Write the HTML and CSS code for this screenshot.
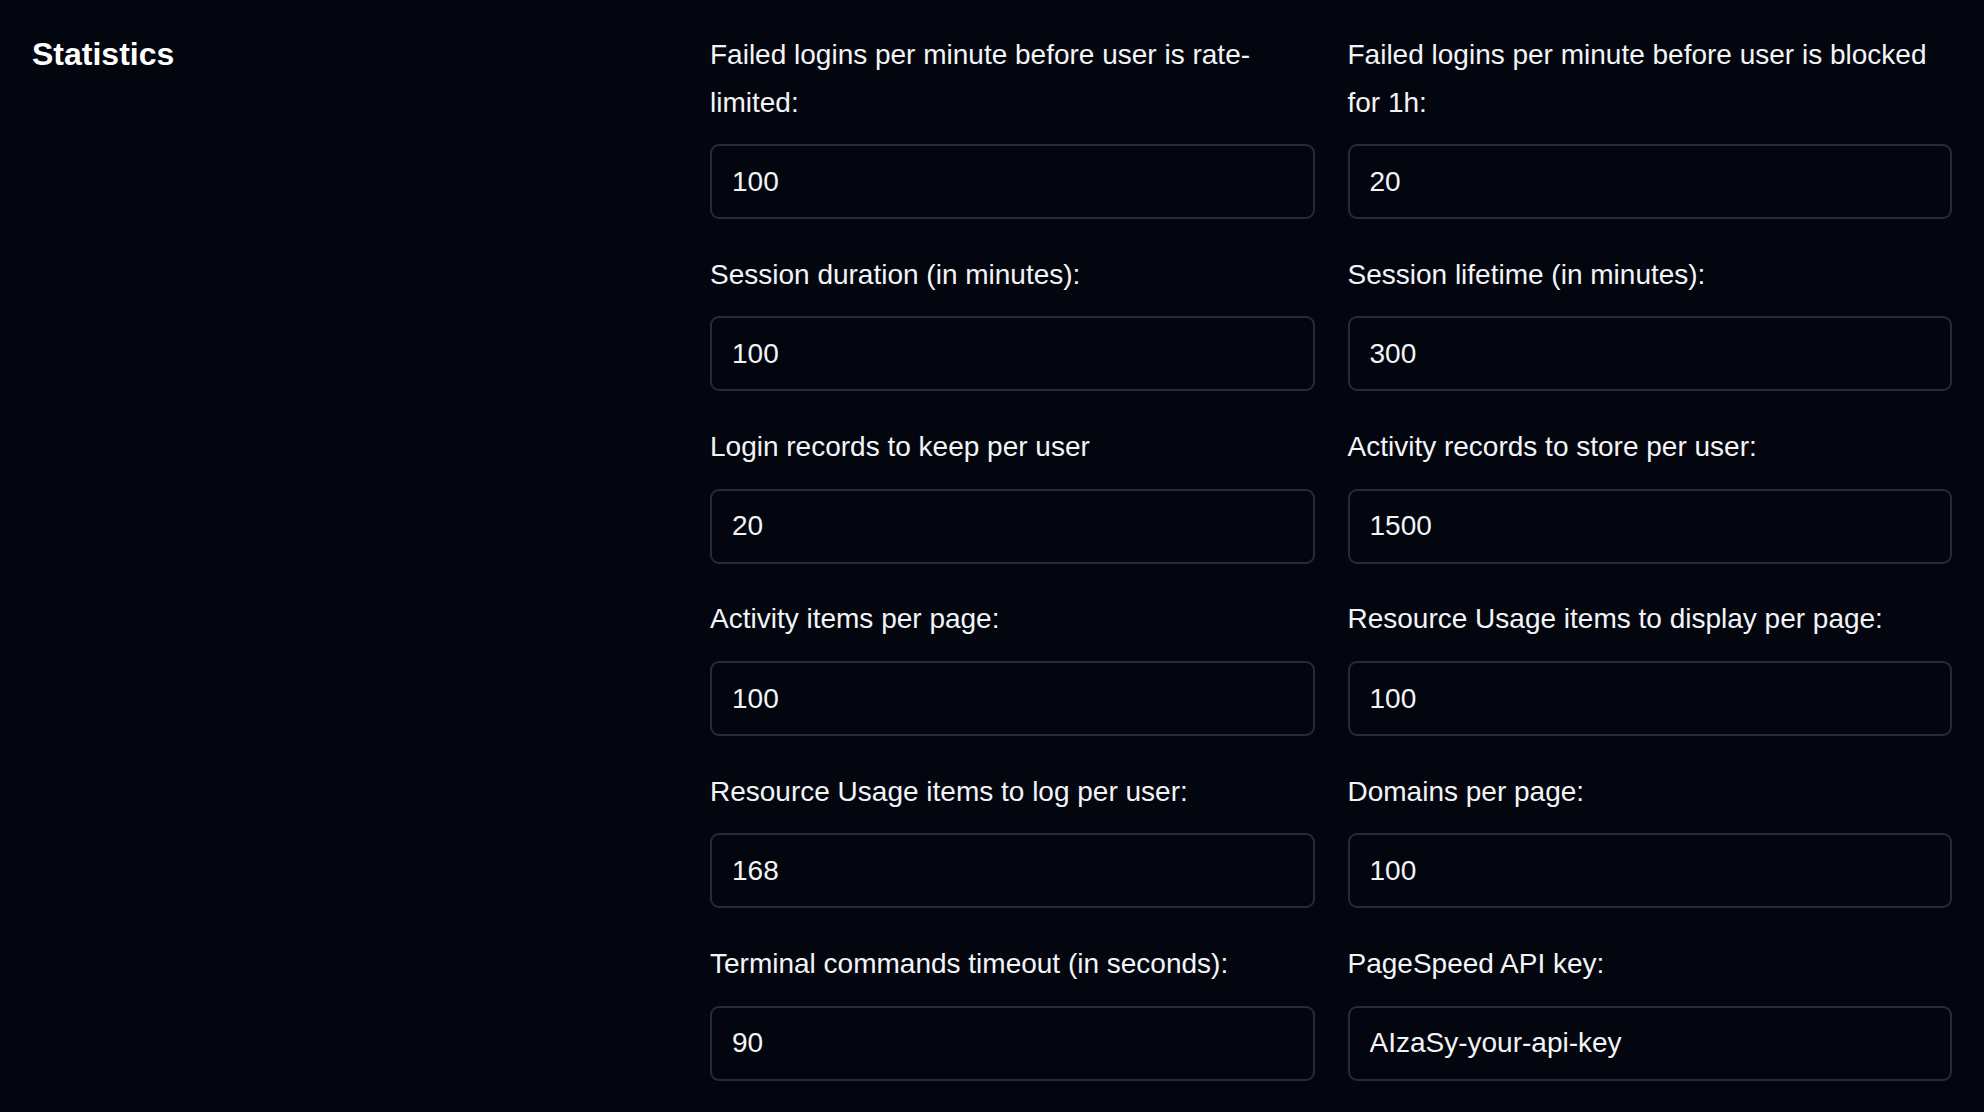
FILE: index.html
```html
<!DOCTYPE html>
<html lang="en">
<head>
<meta charset="utf-8">
<title>Statistics settings</title>
<link rel="stylesheet" href="styles.css">
</head>
<body>
<div class="page">
  <section class="section">
    <h2 class="section-title">Statistics</h2>
    <div class="fields">
      <div class="field">
        <label class="label" for="f1">Failed logins per minute before user is rate-limited:</label>
        <input class="input" id="f1" type="text" value="100">
      </div>
      <div class="field">
        <label class="label" for="f2">Failed logins per minute before user is blocked for 1h:</label>
        <input class="input" id="f2" type="text" value="20">
      </div>
      <div class="field">
        <label class="label" for="f3">Session duration (in minutes):</label>
        <input class="input" id="f3" type="text" value="100">
      </div>
      <div class="field">
        <label class="label" for="f4">Session lifetime (in minutes):</label>
        <input class="input" id="f4" type="text" value="300">
      </div>
      <div class="field">
        <label class="label" for="f5">Login records to keep per user</label>
        <input class="input" id="f5" type="text" value="20">
      </div>
      <div class="field">
        <label class="label" for="f6">Activity records to store per user:</label>
        <input class="input" id="f6" type="text" value="1500">
      </div>
      <div class="field">
        <label class="label" for="f7">Activity items per page:</label>
        <input class="input" id="f7" type="text" value="100">
      </div>
      <div class="field">
        <label class="label" for="f8">Resource Usage items to display per page:</label>
        <input class="input" id="f8" type="text" value="100">
      </div>
      <div class="field">
        <label class="label" for="f9">Resource Usage items to log per user:</label>
        <input class="input" id="f9" type="text" value="168">
      </div>
      <div class="field">
        <label class="label" for="f10">Domains per page:</label>
        <input class="input" id="f10" type="text" value="100">
      </div>
      <div class="field">
        <label class="label" for="f11">Terminal commands timeout (in seconds):</label>
        <input class="input" id="f11" type="text" value="90">
      </div>
      <div class="field">
        <label class="label" for="f12">PageSpeed API key:</label>
        <input class="input" id="f12" type="text" value="AIzaSy-your-api-key">
      </div>
    </div>
  </section>
</div>
</body>
</html>
```
FILE: styles.css
```css
html, body {
  margin: 0;
  padding: 0;
  background: #03060f;
}

body {
  font-family: "Liberation Sans", Arial, sans-serif;
  color: #f3f4f6;
  width: 1984px;
  height: 1112px;
  overflow: hidden;
}

.page {
  padding: 31px 32px 0 32px;
}

.section {
  display: grid;
  grid-template-columns: 646px 1fr;
  column-gap: 32px;
}

.section-title {
  margin: 4px 0 0 0;
  font-size: 32px;
  line-height: 1.2;
  font-weight: 700;
  color: #ffffff;
}

.fields {
  display: grid;
  grid-template-columns: 1fr 1fr;
  column-gap: 33px;
  row-gap: 31.7px;
}

.field {
  display: flex;
  flex-direction: column;
  gap: 18px;
}

.label {
  display: block;
  font-size: 28px;
  line-height: 1.7;
  color: #f3f4f6;
}

.input {
  box-sizing: border-box;
  display: block;
  width: 100%;
  height: 75px;
  margin: 0;
  padding: 0 20px;
  font-family: "Liberation Sans", Arial, sans-serif;
  font-size: 28px;
  color: #f3f4f6;
  background: #03060f;
  border: 2px solid #252c39;
  border-radius: 9px;
  outline: none;
}
```
